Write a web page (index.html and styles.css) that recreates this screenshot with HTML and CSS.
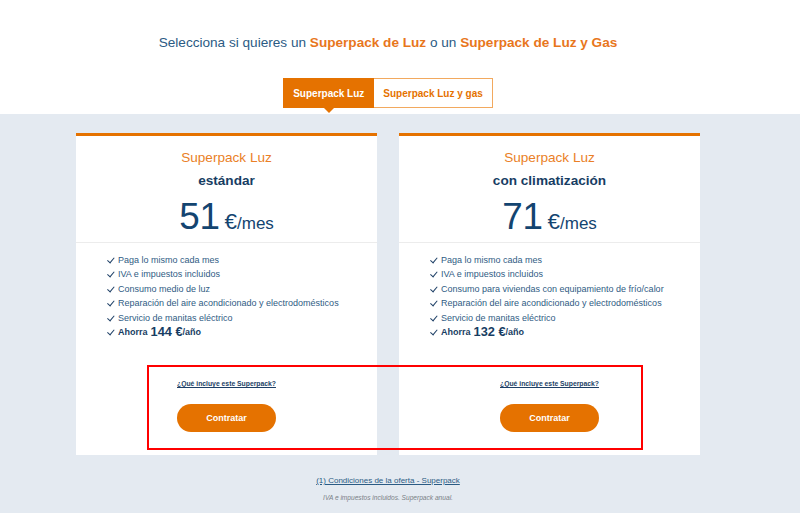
FILE: index.html
```html
<!DOCTYPE html>
<html lang="es">
<head>
<meta charset="utf-8">
<title>Superpack</title>
<link rel="stylesheet" href="styles.css">
</head>
<body>
<header class="top">
  <div class="wrap">
    <h1 class="lead">Selecciona si quieres un <strong>Superpack de Luz</strong> o un <strong>Superpack de Luz y Gas</strong></h1>
    <div class="tabs">
      <span class="tab tab-active">Superpack Luz</span>
      <span class="tab">Superpack Luz y gas</span>
    </div>
  </div>
</header>
<main class="offers">
  <div class="wrap">
    <div class="cards">
      <section class="card">
        <div class="card-head">
          <h2 class="card-title">Superpack Luz</h2>
          <p class="card-sub">estándar</p>
          <p class="price"><span class="num">51</span> <span class="cur">€</span><span class="per">/mes</span></p>
        </div>
        <ul class="feats">
          <li>Paga lo mismo cada mes</li>
          <li>IVA e impuestos incluidos</li>
          <li>Consumo medio de luz</li>
          <li>Reparación del aire acondicionado y electrodomésticos</li>
          <li>Servicio de manitas eléctrico</li>
          <li class="save">Ahorra <span class="big">144 €</span>/año</li>
        </ul>
        <div class="card-foot">
          <a class="more" href="#">¿Qué incluye este Superpack?</a>
          <a class="btn" href="#">Contratar</a>
        </div>
      </section>
      <section class="card">
        <div class="card-head">
          <h2 class="card-title">Superpack Luz</h2>
          <p class="card-sub">con climatización</p>
          <p class="price"><span class="num">71</span> <span class="cur">€</span><span class="per">/mes</span></p>
        </div>
        <ul class="feats">
          <li>Paga lo mismo cada mes</li>
          <li>IVA e impuestos incluidos</li>
          <li>Consumo para viviendas con equipamiento de frío/calor</li>
          <li>Reparación del aire acondicionado y electrodomésticos</li>
          <li>Servicio de manitas eléctrico</li>
          <li class="save">Ahorra <span class="big">132 €</span>/año</li>
        </ul>
        <div class="card-foot">
          <a class="more" href="#">¿Qué incluye este Superpack?</a>
          <a class="btn" href="#">Contratar</a>
        </div>
      </section>
    </div>
    <p class="cond"><a href="#">(1) Condiciones de la oferta - Superpack</a></p>
    <p class="note">IVA e impuestos incluidos. Superpack anual.</p>
  </div>
  <div class="highlight"></div>
</main>
</body>
</html>
```
FILE: styles.css
```css
* { box-sizing: border-box; }
html, body { margin: 0; padding: 0; }
body {
  font-family: "Liberation Sans", Arial, sans-serif;
  background: #e4eaf1;
  color: #2b5b84;
  width: 800px;
  height: 513px;
  overflow: hidden;
  position: relative;
}
.wrap {
  width: 776px;
  display: flex;
  flex-direction: column;
  align-items: center;
}
.top {
  background: #fff;
  height: 114px;
}
.lead {
  margin: 34px 0 0;
  font-size: 13.6px;
  line-height: 18px;
  font-weight: normal;
  color: #2b5b84;
}
.lead strong { color: #e8761c; font-weight: bold; }
.tabs {
  display: flex;
  margin-top: 26px;
  height: 30px;
}
.tab {
  display: flex;
  align-items: center;
  padding: 0 9px 0 9px;
  font-size: 10px;
  font-weight: bold;
  color: #e57200;
  background: #fff;
  border: 1px solid #f2a95f;
  border-left: none;
}
.tab-active {
  position: relative;
  background: #e57200;
  color: #fff;
  border: 1px solid #e57200;
  padding: 0 9px 0 9px;
}
.tab-active::after {
  content: "";
  position: absolute;
  left: 50%;
  top: 100%;
  margin-left: -6px;
  border-left: 6px solid transparent;
  border-right: 6px solid transparent;
  border-top: 6px solid #e57200;
}
.offers { position: relative; }
.cards {
  display: flex;
  gap: 22px;
  margin-top: 19px;
}
.card {
  width: 301px;
  height: 322px;
  background: #fff;
  border-top: 3px solid #e57200;
  display: flex;
  flex-direction: column;
}
.card-head {
  text-align: center;
  padding: 13px 0 5px;
  border-bottom: 1px solid #ececec;
}
.card-title {
  margin: 0;
  font-size: 13.6px;
  line-height: 18px;
  font-weight: normal;
  color: #ea7f27;
}
.card-sub {
  margin: 5px 0 0;
  font-size: 13.6px;
  line-height: 18px;
  font-weight: bold;
  color: #173d63;
}
.price {
  margin: 7px 0 0;
  line-height: 40px;
  height: 40px;
  color: #134470;
}
.num { font-size: 36.8px; }
.cur { font-size: 22.4px; }
.per { font-size: 17px; }
.feats {
  list-style: none;
  margin: 0;
  padding: 10px 0 0 31px;
  font-size: 9px;
  line-height: 14.4px;
  color: #2f5c84;
}
.feats li { display: flex; align-items: center; white-space: nowrap; }
.feats li::before {
  content: "";
  width: 3px;
  height: 5.5px;
  border-right: 1.3px solid #1d3f66;
  border-bottom: 1.3px solid #1d3f66;
  transform: rotate(40deg);
  margin: -2px 5px 0 2px;
  flex: none;
}
.feats li.save { font-weight: bold; color: #173d63; }
.feats .big { font-size: 12.8px; margin: 0 0 0 3px; }
.card-foot {
  padding: 0 0 0 101px;
  margin-top: 40px;
  display: flex;
  flex-direction: column;
  align-items: flex-start;
}
.more {
  white-space: nowrap;
  font-size: 6.8px;
  line-height: 10px;
  color: #1d3f66;
  font-weight: bold;
  text-decoration: underline;
}
.btn {
  margin-top: 15px;
  width: 99px;
  height: 28px;
  border-radius: 14px;
  background: #e57200;
  color: #fff;
  font-size: 9px;
  font-weight: bold;
  text-decoration: none;
  display: flex;
  align-items: center;
  justify-content: center;
}
.cond {
  margin: 20px 0 0;
  font-size: 8px;
  line-height: 12px;
}
.cond a { color: #2b5b84; }
.note {
  margin: 6px 0 0;
  font-size: 6.6px;
  line-height: 10px;
  font-style: italic;
  color: #7a7f86;
}
.highlight {
  position: absolute;
  left: 147px;
  top: 251px;
  width: 496px;
  height: 85px;
  border: 2px solid #ff0000;
}
```
